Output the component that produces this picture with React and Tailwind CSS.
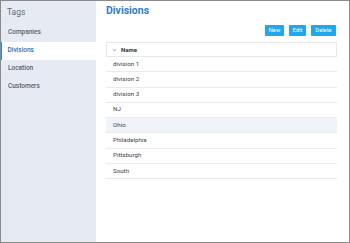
import React from "react";

const rows = ["division 1", "division 2", "division 3", "NJ", "Ohio", "Philadelphia", "Pittsburgh", "South"];
const nav = ["Companies", "Divisions", "Location", "Customers"];

export default function App() {
  return (
    <div
      className="w-[350px] h-[243px] border border-[#8a8a8a] flex overflow-hidden bg-white"
      style={{ fontFamily: "Roboto, 'Liberation Sans', sans-serif" }}
    >
      <div className="w-[95px] shrink-0 bg-[#e6ebf3] flex flex-col">
        <div className="h-[22px] pl-[6px] pt-[6px] text-[8.5px] leading-[10px] text-[#666c74]">Tags</div>
        <div className="flex flex-col mt-[1px]">
          {nav.map((n) => (
            <div
              key={n}
              className={
                n === "Divisions"
                  ? "h-[18px] flex items-center pl-[5.5px] bg-white border-l-[1.5px] border-[#2a86d6] text-[6.5px] font-medium text-[#2a6fb8]"
                  : "h-[18px] flex items-center pl-[7px] text-[6.5px] font-medium text-[#5a6068]"
              }
            >
              {n}
            </div>
          ))}
        </div>
      </div>
      <div className="flex-1 flex flex-col pl-[10px] pr-[12px]">
        <div className="h-[20px] pt-[3px] text-[10.5px] leading-[14px] font-bold text-[#2f7ccc]">Divisions</div>
        <div className="flex justify-end gap-[5px] mt-[4px] mr-[1px]">
          <button className="h-[11px] w-[19px] bg-[#22a6ee] text-white text-[5.8px] rounded-[1px] flex items-center justify-center">New</button>
          <button className="h-[11px] w-[17px] bg-[#22a6ee] text-white text-[5.8px] rounded-[1px] flex items-center justify-center">Edit</button>
          <button className="h-[11px] w-[25px] bg-[#22a6ee] text-white text-[5.8px] rounded-[1px] flex items-center justify-center">Delete</button>
        </div>
        <div className="mt-[6px] flex flex-col">
          <div className="h-[15px] border border-[#e6e8ec] flex items-center pl-[5px] gap-[4px]">
            <svg width="5" height="4" viewBox="0 0 5 4"><path d="M0.8 1.2 L2.5 2.8 L4.2 1.2" fill="none" stroke="#6f7680" strokeWidth="0.7" /></svg>
            <span className="text-[6px] font-bold text-[#333]">Name</span>
          </div>
          {rows.map((r) => (
            <div
              key={r}
              className={
                "h-[15.3px] border-b border-[#e8eaee] flex items-center pl-[7px] text-[6.2px] text-[#3d4249] " +
                (r === "Ohio" ? "bg-[#f0f3f8]" : "")
              }
            >
              {r}
            </div>
          ))}
        </div>
      </div>
    </div>
  );
}
